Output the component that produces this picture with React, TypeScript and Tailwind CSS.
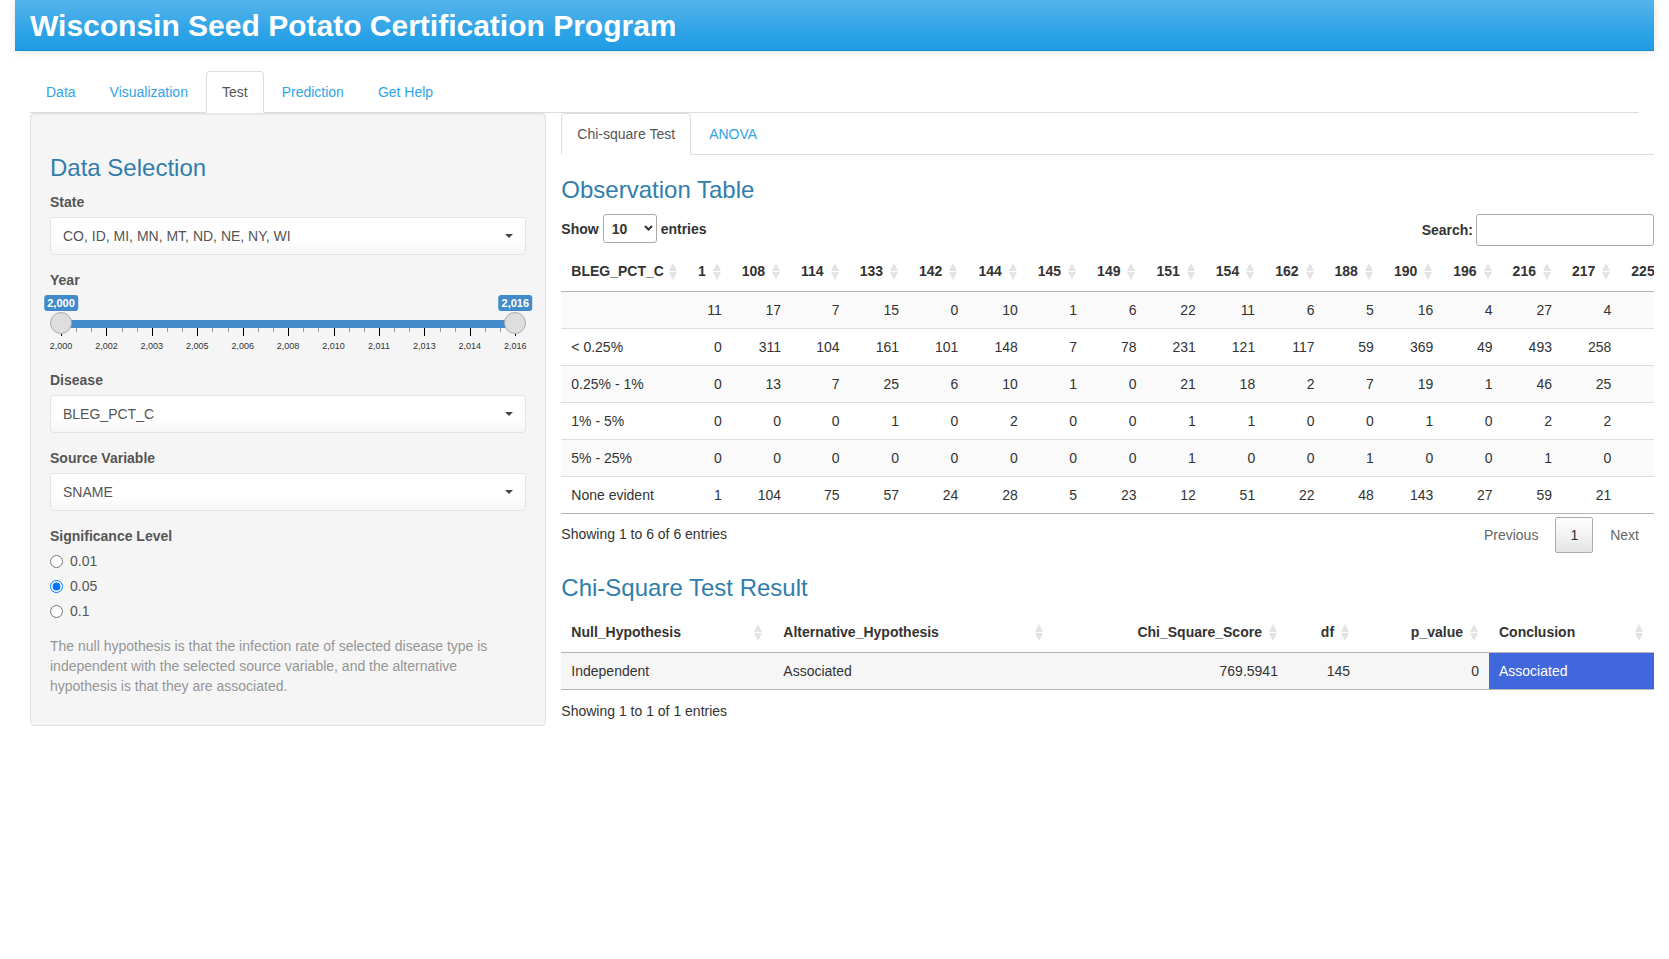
import { useState } from "react";

const NAV_TABS = ["Data", "Visualization", "Test", "Prediction", "Get Help"];

const OBS_COLUMNS = [
  "1", "108", "114", "133", "142", "144", "145", "149", "151",
  "154", "162", "188", "190", "196", "216", "217", "225",
];

const OBS_ROWS: { label: string; values: number[] }[] = [
  { label: "", values: [11, 17, 7, 15, 0, 10, 1, 6, 22, 11, 6, 5, 16, 4, 27, 4] },
  { label: "< 0.25%", values: [0, 311, 104, 161, 101, 148, 7, 78, 231, 121, 117, 59, 369, 49, 493, 258] },
  { label: "0.25% - 1%", values: [0, 13, 7, 25, 6, 10, 1, 0, 21, 18, 2, 7, 19, 1, 46, 25] },
  { label: "1% - 5%", values: [0, 0, 0, 1, 0, 2, 0, 0, 1, 1, 0, 0, 1, 0, 2, 2] },
  { label: "5% - 25%", values: [0, 0, 0, 0, 0, 0, 0, 0, 1, 0, 0, 1, 0, 0, 1, 0] },
  { label: "None evident", values: [1, 104, 75, 57, 24, 28, 5, 23, 12, 51, 22, 48, 143, 27, 59, 21] },
];

const YEAR_LABELS = [
  "2,000", "2,002", "2,003", "2,005", "2,006", "2,008",
  "2,010", "2,011", "2,013", "2,014", "2,016",
];

const YEAR_TICKS = Array.from({ length: 31 }, (_, i) => i);

function Tabs({ items, active, label }: { items: string[]; active: string; label: string }) {
  return (
    <nav aria-label={label} className="border-b border-[#dddddd]">
      <ul className="-mb-px flex gap-0.5">
        {items.map((item) => (
          <li key={item}>
            <a
              href="#"
              aria-current={item === active ? "page" : undefined}
              className={
                item === active
                  ? "block rounded-t border border-[#dddddd] border-b-white bg-white px-[15px] py-2.5 text-[#555555]"
                  : "block rounded-t border border-transparent px-[15px] py-2.5 text-[#2fa4e7]"
              }
            >
              {item}
            </a>
          </li>
        ))}
      </ul>
    </nav>
  );
}

function Heading({ children }: { children: string }) {
  return <h3 className="mt-5 mb-2.5 text-2xl leading-[29px] font-medium text-[#317eac]">{children}</h3>;
}

function PickerField({ id, label, value }: { id: string; label: string; value: string }) {
  return (
    <div className="mb-[15px]">
      <label htmlFor={id} className="mb-[5px] block font-bold">
        {label}
      </label>
      <div className="relative">
        <select
          id={id}
          className="block h-[38px] w-full appearance-none rounded border border-[#e4e4e4] bg-linear-to-b from-white from-60% to-[#f6f6f6] px-3 text-[#555555]"
        >
          <option>{value}</option>
        </select>
        <svg
          aria-hidden="true"
          viewBox="0 0 8 4"
          className="pointer-events-none absolute top-[17px] right-[13px] h-1 w-2 fill-[#444444]"
        >
          <path d="M0 0h8L4 4z" />
        </svg>
      </div>
    </div>
  );
}

const THUMB =
  "pointer-events-none absolute inset-x-0 top-[17px] m-0 h-[22px] w-full appearance-none bg-transparent [&::-webkit-slider-thumb]:pointer-events-auto [&::-webkit-slider-thumb]:size-[22px] [&::-webkit-slider-thumb]:appearance-none [&::-webkit-slider-thumb]:rounded-full [&::-webkit-slider-thumb]:border [&::-webkit-slider-thumb]:border-[#ababab] [&::-webkit-slider-thumb]:bg-[#dedede]";

function YearSlider() {
  const [from, setFrom] = useState(2000);
  const [to, setTo] = useState(2016);
  const percent = (year: number) => `${((year - 2000) / 16) * 100}%`;

  return (
    <fieldset className="mb-[15px]">
      <legend className="mb-[5px] block font-bold">Year</legend>
      <div className="relative h-[60px]">
        <div className="relative mx-[11px] h-full">
          {[from, to].map((year, i) => (
            <span
              key={i}
              style={{ left: percent(year) }}
              className="absolute top-0 -translate-x-1/2 rounded-[3px] bg-[#428bca] px-[3px] text-[11px] leading-4 font-bold text-white"
            >
              {year.toLocaleString("en-US")}
            </span>
          ))}
          <div
            style={{ left: percent(from), width: `${((to - from) / 16) * 100}%` }}
            className="absolute top-[25px] h-2 bg-[#428bca]"
          />
          <div className="-mr-px flex justify-between pt-[33px]">
            {YEAR_TICKS.map((tick) => (
              <span key={tick} className={tick % 3 === 0 ? "h-2 w-px bg-black" : "h-1 w-px bg-[#999999]"} />
            ))}
          </div>
          <div className="mt-1 flex justify-between text-[9px] leading-3 text-[#333333]">
            {YEAR_LABELS.map((label) => (
              <span key={label} className="flex w-0 justify-center">
                {label}
              </span>
            ))}
          </div>
        </div>
        <input
          type="range"
          aria-label="First year"
          min={2000}
          max={2016}
          value={from}
          onChange={(e) => setFrom(Math.min(Number(e.target.value), to))}
          className={THUMB}
        />
        <input
          type="range"
          aria-label="Last year"
          min={2000}
          max={2016}
          value={to}
          onChange={(e) => setTo(Math.max(Number(e.target.value), from))}
          className={THUMB}
        />
      </div>
    </fieldset>
  );
}

function Sidebar() {
  return (
    <form className="rounded border border-[#e3e3e3] bg-[#f5f5f5] p-[19px] text-[#555555] shadow-[inset_0_1px_1px_rgba(0,0,0,0.05)]">
      <Heading>Data Selection</Heading>
      <PickerField id="state" label="State" value="CO, ID, MI, MN, MT, ND, NE, NY, WI" />
      <YearSlider />
      <PickerField id="disease" label="Disease" value="BLEG_PCT_C" />
      <PickerField id="source" label="Source Variable" value="SNAME" />
      <fieldset className="mb-[15px]">
        <legend className="mb-[5px] font-bold">Significance Level</legend>
        <div className="flex flex-col items-start gap-[5px]">
          {["0.01", "0.05", "0.1"].map((level) => (
            <label key={level} className="flex items-center gap-[7px]">
              <input
                type="radio"
                name="significance"
                value={level}
                defaultChecked={level === "0.05"}
                className="m-0 size-[13px]"
              />
              {level}
            </label>
          ))}
        </div>
      </fieldset>
      <p className="mb-2.5 text-[#959595]">
        The null hypothesis is that the infection rate of selected disease type is independent with the selected
        source variable, and the alternative hypothesis is that they are associated.
      </p>
    </form>
  );
}

function SortHeader({ name, numeric }: { name: string; numeric?: boolean }) {
  return (
    <th scope="col" className="border-b border-[#b5b5b5] py-2.5 pr-[11px] pl-2.5 font-bold">
      <div className={numeric ? "flex items-center justify-end gap-[7px]" : "flex items-center justify-between gap-[5px]"}>
        {name}
        <svg aria-hidden="true" viewBox="0 0 8 17" className="h-[17px] w-2 shrink-0 fill-[#e3e3e3]">
          <path d="M4 0l4 8H0zM0 9h8l-4 8z" />
        </svg>
      </div>
    </th>
  );
}

function ObservationTable() {
  return (
    <section>
      <Heading>Observation Table</Heading>
      <div className="flex items-start justify-between pb-[5px]">
        <label className="flex items-center gap-1 font-bold">
          Show
          <span className="relative">
            <select
              defaultValue="10"
              className="block h-[29px] w-[54px] appearance-none rounded-[3px] border border-[#aaaaaa] bg-white px-2 font-bold"
            >
              <option>10</option>
              <option>25</option>
              <option>50</option>
              <option>100</option>
            </select>
            <svg
              aria-hidden="true"
              viewBox="0 0 9 6"
              className="pointer-events-none absolute top-[11px] right-1 h-1.5 w-[9px] fill-none stroke-[#333333] stroke-2"
            >
              <path d="M1 1l3.5 3.5L8 1" />
            </svg>
          </span>
          entries
        </label>
        <label className="flex items-center gap-[3px] font-bold">
          Search:
          <input
            type="search"
            className="h-8 w-[178px] rounded-[3px] border border-[#aaaaaa] bg-transparent px-[5px] font-normal"
          />
        </label>
      </div>
      <div className="overflow-hidden border-b border-[#b5b5b5]">
        <table className="border-separate border-spacing-0 text-right whitespace-nowrap">
          <thead>
            <tr>
              <SortHeader name="BLEG_PCT_C" />
              {OBS_COLUMNS.map((name) => (
                <SortHeader key={name} name={name} numeric />
              ))}
            </tr>
          </thead>
          <tbody>
            {OBS_ROWS.map((row, i) => (
              <tr key={row.label} className={i % 2 === 0 ? "bg-[#fafafa]" : "bg-white"}>
                <td className={i === 0 ? "px-2.5 py-2 text-left" : "border-t border-[#dddddd] px-2.5 py-2 text-left"}>
                  {row.label}
                </td>
                {OBS_COLUMNS.map((name, c) => (
                  <td key={name} className={i === 0 ? "px-2.5 py-2" : "border-t border-[#dddddd] px-2.5 py-2"}>
                    {row.values[c]}
                  </td>
                ))}
              </tr>
            ))}
          </tbody>
        </table>
      </div>
      <div className="flex items-start justify-between">
        <p className="pt-2.5">Showing 1 to 6 of 6 entries</p>
        <div className="flex gap-0.5 pt-[3px] text-[#666666]">
          <button type="button" className="rounded-xs border border-transparent px-3.5 py-[7px]">
            Previous
          </button>
          <button
            type="button"
            className="rounded-xs border border-[#ababab] bg-linear-to-b from-white to-[#e5e5e5] px-3.5 py-[7px] text-[#333333]"
          >
            1
          </button>
          <button type="button" className="rounded-xs border border-transparent px-3.5 py-[7px]">
            Next
          </button>
        </div>
      </div>
    </section>
  );
}

function ResultTable() {
  return (
    <section>
      <Heading>Chi-Square Test Result</Heading>
      <table className="w-full table-fixed border-separate border-spacing-0 border-b border-[#b5b5b5] text-left">
        <colgroup>
          <col className="w-[19.4%]" />
          <col className="w-[25.7%]" />
          <col className="w-[21.4%]" />
          <col className="w-[6.6%]" />
          <col className="w-[11.8%]" />
          <col className="w-[15.1%]" />
        </colgroup>
        <thead>
          <tr>
            <SortHeader name="Null_Hypothesis" />
            <SortHeader name="Alternative_Hypothesis" />
            <SortHeader name="Chi_Square_Score" numeric />
            <SortHeader name="df" numeric />
            <SortHeader name="p_value" numeric />
            <SortHeader name="Conclusion" />
          </tr>
        </thead>
        <tbody>
          <tr className="bg-[#f6f6f6]">
            <td className="px-2.5 py-2">Independent</td>
            <td className="px-2.5 py-2">Associated</td>
            <td className="px-2.5 py-2 text-right">769.5941</td>
            <td className="px-2.5 py-2 text-right">145</td>
            <td className="px-2.5 py-2 text-right">0</td>
            <td className="bg-[#4067dc] px-2.5 py-2 text-white">Associated</td>
          </tr>
        </tbody>
      </table>
      <p className="pt-[11px]">Showing 1 to 1 of 1 entries</p>
    </section>
  );
}

export default function App() {
  return (
    <div className="min-h-screen overflow-x-hidden bg-white px-[15px] font-['Liberation_Sans',Arial,sans-serif] text-sm leading-5 text-[#333333]">
      <header className="border-b border-[#178acc] bg-linear-to-b from-[#54b4eb] via-[#2fa4e7] via-60% to-[#1d9ce5] px-[15px] pt-0.5 shadow-[0_1px_10px_rgba(0,0,0,0.1)]">
        <h1 className="text-3xl leading-12 font-bold text-white">Wisconsin Seed Potato Certification Program</h1>
      </header>
      <div className="px-[15px] pt-5">
        <Tabs items={NAV_TABS} active="Test" label="Main" />
      </div>
      <div className="grid grid-cols-[minmax(0,1fr)_minmax(0,2fr)] items-start">
        <aside className="px-[15px]">
          <Sidebar />
        </aside>
        <main>
          <Tabs items={["Chi-square Test", "ANOVA"]} active="Chi-square Test" label="Tests" />
          <ObservationTable />
          <ResultTable />
        </main>
      </div>
    </div>
  );
}
